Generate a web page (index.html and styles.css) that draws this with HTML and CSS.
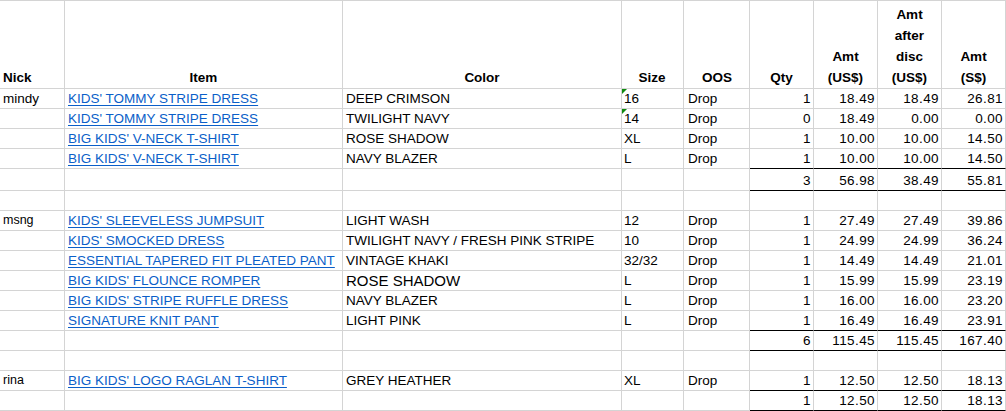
FILE: index.html
```html
<!DOCTYPE html>
<html>
<head>
<meta charset="utf-8">
<link rel="stylesheet" href="styles.css">
</head>
<body>
<div class="sheet">
  <div class="row hdr">
    <div class="c left"><span>Nick</span></div>
    <div class="c"><span>Item</span></div>
    <div class="c"><span>Color</span></div>
    <div class="c"><span>Size</span></div>
    <div class="c"><span>OOS</span></div>
    <div class="c"><span>Qty</span></div>
    <div class="c"><span>Amt</span><span>(US$)</span></div>
    <div class="c"><span>Amt</span><span>after</span><span>disc</span><span>(US$)</span></div>
    <div class="c"><span>Amt</span><span>(S$)</span></div>
  </div>

  <div class="row">
    <div class="c">mindy</div>
    <div class="c"><a class="lnk">KIDS' TOMMY STRIPE DRESS</a></div>
    <div class="c">DEEP CRIMSON</div>
    <div class="c flag">16</div>
    <div class="c">Drop</div>
    <div class="c num">1</div>
    <div class="c num">18.49</div>
    <div class="c num">18.49</div>
    <div class="c num">26.81</div>
  </div>
  <div class="row">
    <div class="c"></div>
    <div class="c"><a class="lnk">KIDS' TOMMY STRIPE DRESS</a></div>
    <div class="c">TWILIGHT NAVY</div>
    <div class="c flag">14</div>
    <div class="c">Drop</div>
    <div class="c num">0</div>
    <div class="c num">18.49</div>
    <div class="c num">0.00</div>
    <div class="c num">0.00</div>
  </div>
  <div class="row">
    <div class="c"></div>
    <div class="c"><a class="lnk">BIG KIDS' V-NECK T-SHIRT</a></div>
    <div class="c">ROSE SHADOW</div>
    <div class="c">XL</div>
    <div class="c">Drop</div>
    <div class="c num">1</div>
    <div class="c num">10.00</div>
    <div class="c num">10.00</div>
    <div class="c num">14.50</div>
  </div>
  <div class="row pre">
    <div class="c"></div>
    <div class="c"><a class="lnk">BIG KIDS' V-NECK T-SHIRT</a></div>
    <div class="c">NAVY BLAZER</div>
    <div class="c">L</div>
    <div class="c">Drop</div>
    <div class="c num">1</div>
    <div class="c num">10.00</div>
    <div class="c num">10.00</div>
    <div class="c num">14.50</div>
  </div>
  <div class="row tot tall">
    <div class="c"></div>
    <div class="c"></div>
    <div class="c"></div>
    <div class="c"></div>
    <div class="c"></div>
    <div class="c num">3</div>
    <div class="c num">56.98</div>
    <div class="c num">38.49</div>
    <div class="c num">55.81</div>
  </div>
  <div class="row">
    <div class="c"></div><div class="c"></div><div class="c"></div><div class="c"></div><div class="c"></div><div class="c"></div><div class="c"></div><div class="c"></div><div class="c"></div>
  </div>

  <div class="row">
    <div class="c small">msng</div>
    <div class="c"><a class="lnk">KIDS' SLEEVELESS JUMPSUIT</a></div>
    <div class="c">LIGHT WASH</div>
    <div class="c">12</div>
    <div class="c">Drop</div>
    <div class="c num">1</div>
    <div class="c num">27.49</div>
    <div class="c num">27.49</div>
    <div class="c num">39.86</div>
  </div>
  <div class="row">
    <div class="c"></div>
    <div class="c"><a class="lnk">KIDS' SMOCKED DRESS</a></div>
    <div class="c">TWILIGHT NAVY / FRESH PINK STRIPE</div>
    <div class="c">10</div>
    <div class="c">Drop</div>
    <div class="c num">1</div>
    <div class="c num">24.99</div>
    <div class="c num">24.99</div>
    <div class="c num">36.24</div>
  </div>
  <div class="row">
    <div class="c"></div>
    <div class="c"><a class="lnk">ESSENTIAL TAPERED FIT PLEATED PANT</a></div>
    <div class="c">VINTAGE KHAKI</div>
    <div class="c">32/32</div>
    <div class="c">Drop</div>
    <div class="c num">1</div>
    <div class="c num">14.49</div>
    <div class="c num">14.49</div>
    <div class="c num">21.01</div>
  </div>
  <div class="row">
    <div class="c"></div>
    <div class="c"><a class="lnk">BIG KIDS' FLOUNCE ROMPER</a></div>
    <div class="c big">ROSE SHADOW</div>
    <div class="c">L</div>
    <div class="c">Drop</div>
    <div class="c num">1</div>
    <div class="c num">15.99</div>
    <div class="c num">15.99</div>
    <div class="c num">23.19</div>
  </div>
  <div class="row">
    <div class="c"></div>
    <div class="c"><a class="lnk">BIG KIDS' STRIPE RUFFLE DRESS</a></div>
    <div class="c">NAVY BLAZER</div>
    <div class="c">L</div>
    <div class="c">Drop</div>
    <div class="c num">1</div>
    <div class="c num">16.00</div>
    <div class="c num">16.00</div>
    <div class="c num">23.20</div>
  </div>
  <div class="row pre">
    <div class="c"></div>
    <div class="c"><a class="lnk">SIGNATURE KNIT PANT</a></div>
    <div class="c">LIGHT PINK</div>
    <div class="c">L</div>
    <div class="c">Drop</div>
    <div class="c num">1</div>
    <div class="c num">16.49</div>
    <div class="c num">16.49</div>
    <div class="c num">23.91</div>
  </div>
  <div class="row tot">
    <div class="c"></div>
    <div class="c"></div>
    <div class="c"></div>
    <div class="c"></div>
    <div class="c"></div>
    <div class="c num">6</div>
    <div class="c num">115.45</div>
    <div class="c num">115.45</div>
    <div class="c num">167.40</div>
  </div>
  <div class="row">
    <div class="c"></div><div class="c"></div><div class="c"></div><div class="c"></div><div class="c"></div><div class="c"></div><div class="c"></div><div class="c"></div><div class="c"></div>
  </div>

  <div class="row pre">
    <div class="c small">rina</div>
    <div class="c"><a class="lnk">BIG KIDS' LOGO RAGLAN T-SHIRT</a></div>
    <div class="c">GREY HEATHER</div>
    <div class="c">XL</div>
    <div class="c">Drop</div>
    <div class="c num">1</div>
    <div class="c num">12.50</div>
    <div class="c num">12.50</div>
    <div class="c num">18.13</div>
  </div>
  <div class="row tot">
    <div class="c"></div>
    <div class="c"></div>
    <div class="c"></div>
    <div class="c"></div>
    <div class="c"></div>
    <div class="c num">1</div>
    <div class="c num">12.50</div>
    <div class="c num">12.50</div>
    <div class="c num">18.13</div>
  </div>
</div>
</body>
</html>
```

FILE: styles.css
```css
html, body {
  margin: 0;
  padding: 0;
  background: #ffffff;
}

body {
  font-family: "Comic Sans MS", "Liberation Sans", Arial, sans-serif;
  font-size: 13.5px;
  color: #000000;
  width: 1006px;
  height: 411px;
  overflow: hidden;
}

.sheet {
  border-top: 1px solid #d4d4d4;
  width: 1006px;
}

.row {
  display: grid;
  grid-template-columns: 65px 278px 279px 62px 66px 64px 64px 64px 64px;
  height: 20px;
}

.row.tall {
  height: 22px;
}

.row.hdr {
  height: 88px;
}

.c {
  box-sizing: border-box;
  border-right: 1px solid #d4d4d4;
  border-bottom: 1px solid #d4d4d4;
  padding: 0 3px;
  line-height: 19px;
  white-space: nowrap;
  overflow: hidden;
  position: relative;
}

.row.tall .c {
  line-height: 23px;
}

.hdr .c {
  display: flex;
  flex-direction: column;
  justify-content: flex-end;
  align-items: center;
  font-weight: bold;
  line-height: 21px;
}

.hdr .c.left {
  align-items: flex-start;
}

.row .c:nth-child(4) {
  padding-left: 2px;
}

.row .c:nth-child(5) {
  padding-left: 4px;
}

.num {
  text-align: right;
  letter-spacing: 0.4px;
  padding-right: 2px;
}

.row.pre .c:nth-child(n+6),
.row.tot .c:nth-child(n+6) {
  border-bottom-color: #000000;
}

.lnk {
  color: #0b5fc9;
  text-decoration: underline;
  text-decoration-thickness: 1px;
  text-underline-offset: 2px;
}

.big {
  font-size: 15px;
}

.small {
  font-size: 12.5px;
}

.flag::before {
  content: "";
  position: absolute;
  left: 0;
  top: 0;
  width: 0;
  height: 0;
  border-top: 5px solid #108a10;
  border-right: 5px solid transparent;
}
```
